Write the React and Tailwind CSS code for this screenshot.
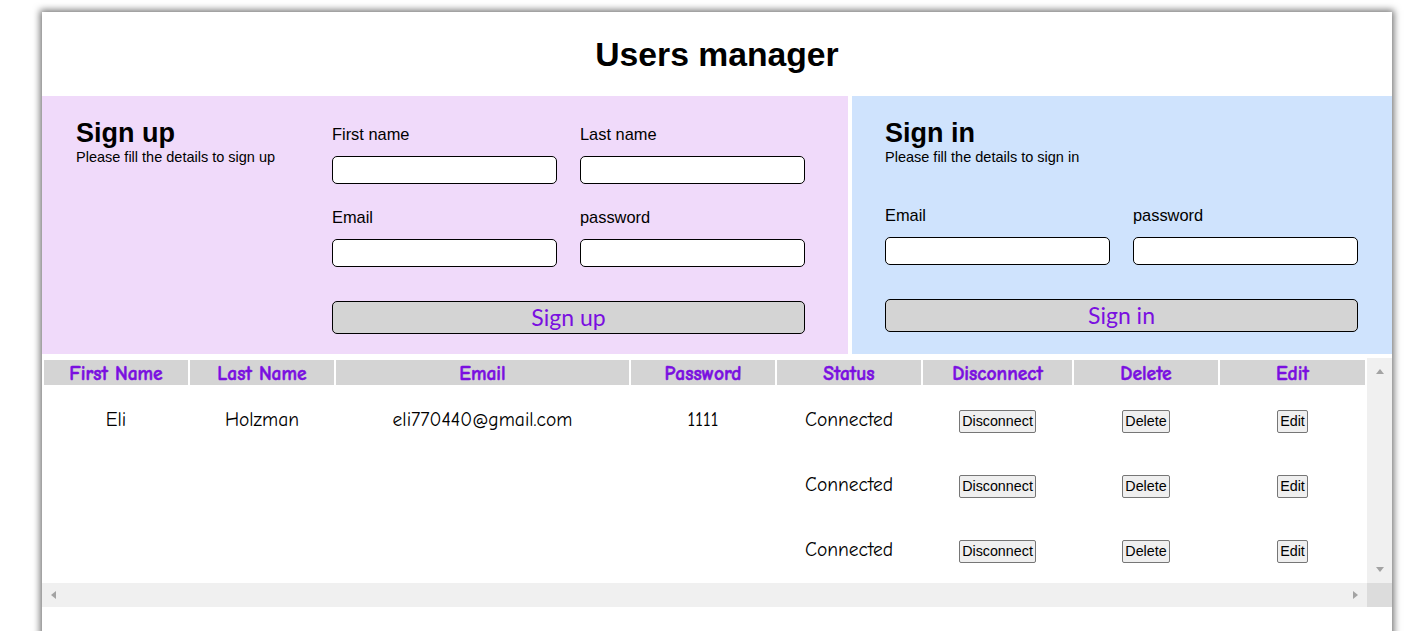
import React from "react";

const users = [
  { first: "Eli", last: "Holzman", email: "eli770440@gmail.com", password: "1111" },
  { first: "", last: "", email: "", password: "" },
  { first: "", last: "", email: "", password: "" },
];

const columns = [
  { label: "First Name", w: "w-[144px]" },
  { label: "Last Name", w: "w-[144px]" },
  { label: "Email", w: "w-[293px]" },
  { label: "Password", w: "w-[144px]" },
  { label: "Status", w: "w-[144px]" },
  { label: "Disconnect", w: "w-[149px]" },
  { label: "Delete", w: "w-[144px]" },
  { label: "Edit", w: "w-[145px]" },
];

const comic = "font-['Comic_Sans_MS','Comic_Neue','Noto_Sans',sans-serif]";

const Field = ({ label }) => (
  <div className="flex flex-col">
    <label className="text-[16.4px] leading-[18px] text-black">{label}</label>
    <input className="mt-[13px] h-[28px] w-[225px] rounded-[5px] border border-black bg-white px-2 outline-none" />
  </div>
);

const SubmitButton = ({ children, className = "" }) => (
  <button
    className={`w-full rounded-[5px] border border-black bg-[#d4d4d4] text-[23px] text-[#7a0fe0] font-['Lato',sans-serif] ${className}`}
  >
    {children}
  </button>
);

const SmallButton = ({ children }) => (
  <button className="rounded-[2px] border border-[#767676] bg-[#efefef] px-[2px] py-[1px] text-[14.3px] leading-[19px] text-black font-['Liberation_Sans',Arial,sans-serif]">
    {children}
  </button>
);

const Arrow = ({ dir }) => {
  const pts = {
    up: "0,5 4,0 8,5",
    down: "0,0 8,0 4,5",
    left: "5,0 5,8 0,4",
    right: "0,0 0,8 5,4",
  }[dir];
  const vertical = dir === "up" || dir === "down";
  return (
    <svg className={vertical ? "w-[8px] h-[5px]" : "w-[5px] h-[8px]"} viewBox={vertical ? "0 0 8 5" : "0 0 5 8"}>
      <polygon points={pts} fill="#a3a3a3" />
    </svg>
  );
};

export default function App() {
  return (
    <div className="min-h-[631px] bg-white font-['Liberation_Sans',Arial,sans-serif] overflow-hidden">
      <div className="ml-[42px] mt-[12px] w-[1350px] h-[640px] bg-white shadow-[0_0_7px_2px_rgba(0,0,0,0.55)]">
        <h1 className="h-[84px] flex items-center justify-center text-[33.7px] font-bold text-black">
          Users manager
        </h1>

        <div className="flex h-[258px]">
          {/* Sign up */}
          <div className="w-[806px] bg-[#f0dafa] flex pl-[34px] pt-[22px]">
            <div className="w-[256px]">
              <h2 className="text-[27px] leading-[30px] font-bold text-black">Sign up</h2>
              <p className="mt-[1px] text-[14.5px] leading-[16px] text-black">Please fill the details to sign up</p>
            </div>
            <div className="pt-[7px] w-[473px]">
              <div className="grid grid-cols-2 gap-x-[23px] gap-y-[24px]">
                <Field label="First name" />
                <Field label="Last name" />
                <Field label="Email" />
                <Field label="password" />
              </div>
              <SubmitButton className="mt-[34px] h-[33px] leading-[31px]">Sign up</SubmitButton>
            </div>
          </div>

          <div className="w-[4px] bg-white" />

          {/* Sign in */}
          <div className="flex-1 bg-[#cfe3fd] pl-[33px] pr-[34px] pt-[22px]">
            <h2 className="text-[27px] leading-[30px] font-bold text-black">Sign in</h2>
            <p className="mt-[1px] text-[14.5px] leading-[16px] text-black">Please fill the details to sign in</p>
            <div className="mt-[41px] grid grid-cols-2 gap-x-[23px] w-[473px]">
              <Field label="Email" />
              <Field label="password" />
            </div>
            <SubmitButton className="mt-[34px] h-[33px] leading-[31px] w-[473px]">Sign in</SubmitButton>
          </div>
        </div>

        {/* Users table */}
        <div className="pt-[4px]">
          <div className="flex h-[225px]">
            <div className="w-[1325px] overflow-hidden">
              <table className={`border-separate border-spacing-[2px] w-[1325px] table-fixed ${comic}`}>
                <thead>
                  <tr>
                    {columns.map((c) => (
                      <th
                        key={c.label}
                        className={`${c.w} h-[25px] pt-[2px] pb-0 px-0 bg-[#d4d4d4] text-[19.5px] font-bold text-[#7a0fe0] leading-[23px] [-webkit-text-stroke:0.5px_#7a0fe0]`}
                      >
                        {c.label}
                      </th>
                    ))}
                  </tr>
                </thead>
                <tbody>
                  {users.map((u, i) => (
                    <tr key={i} className="h-[63px] text-[19.5px] text-black text-center">
                      <td className="pt-[2px] pb-0 px-0">{u.first}</td>
                      <td className="pt-[2px] pb-0 px-0">{u.last}</td>
                      <td className="pt-[2px] pb-0 px-0">{u.email}</td>
                      <td className="pt-[2px] pb-0 px-0">{u.password}</td>
                      <td className="pt-[2px] pb-0 px-0">Connected</td>
                      <td className="pt-[2px] pb-0 px-0"><SmallButton>Disconnect</SmallButton></td>
                      <td className="pt-[2px] pb-0 px-0"><SmallButton>Delete</SmallButton></td>
                      <td className="pt-[2px] pb-0 px-0"><SmallButton>Edit</SmallButton></td>
                    </tr>
                  ))}
                </tbody>
              </table>
            </div>
            {/* vertical scrollbar */}
            <div className="w-[25px] bg-[#f0f0f0] flex flex-col items-center justify-between py-[11px]">
              <Arrow dir="up" />
              <Arrow dir="down" />
            </div>
          </div>
          {/* horizontal scrollbar */}
          <div className="flex h-[24px]">
            <div className="flex-1 bg-[#f0f0f0] flex items-center justify-between px-[9px]">
              <Arrow dir="left" />
              <Arrow dir="right" />
            </div>
            <div className="w-[25px] bg-[#dcdcdc]" />
          </div>
        </div>
      </div>
    </div>
  );
}
